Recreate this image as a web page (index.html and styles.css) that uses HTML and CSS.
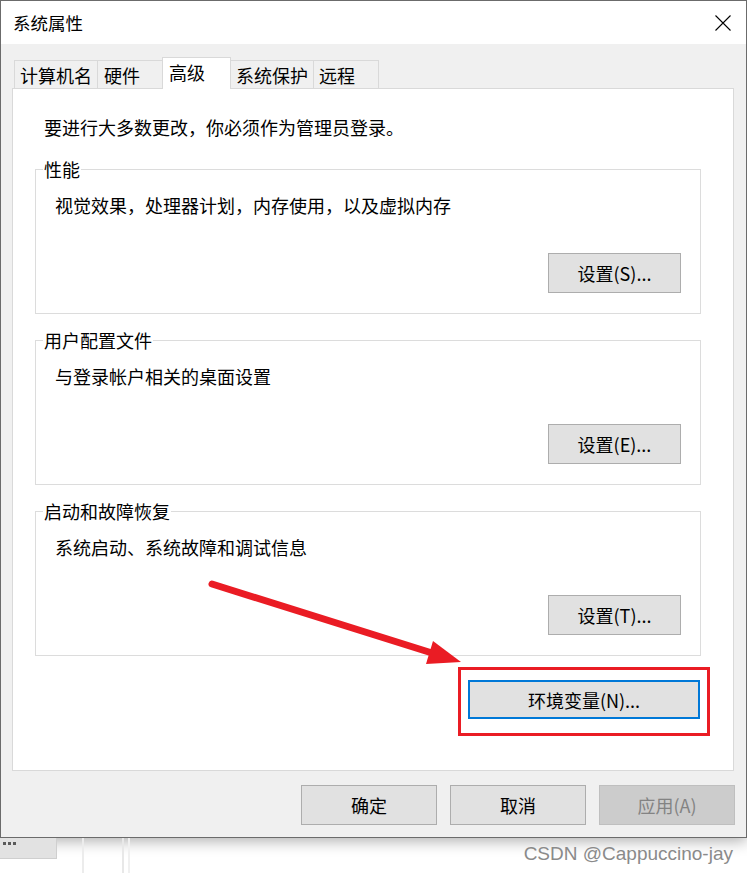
FILE: index.html
```html
<!DOCTYPE html>
<html lang="zh-CN">
<head>
<meta charset="utf-8">
<title>系统属性</title>
<link rel="stylesheet" href="styles.css">
</head>
<body>
<div class="window">
  <div class="titlebar">
    <span class="title">系统属性</span>
    <svg class="close" width="16" height="16" viewBox="0 0 16 16"><path d="M0.5 0.5 L15.5 15.5 M15.5 0.5 L0.5 15.5" stroke="#000" stroke-width="1.1" fill="none"/></svg>
  </div>
  <div class="body">
    <div class="tabs">
      <div class="tab">计算机名</div>
      <div class="tab">硬件</div>
      <div class="tab active">高级</div>
      <div class="tab">系统保护</div>
      <div class="tab">远程</div>
    </div>
    <div class="panel">
      <p class="intro">要进行大多数更改，你必须作为管理员登录。</p>
      <div class="group">
        <span class="group-title">性能</span>
        <p class="group-desc">视觉效果，处理器计划，内存使用，以及虚拟内存</p>
        <div class="group-actions"><button class="btn btn-set">设置(S)...</button></div>
      </div>
      <div class="group">
        <span class="group-title">用户配置文件</span>
        <p class="group-desc">与登录帐户相关的桌面设置</p>
        <div class="group-actions"><button class="btn btn-set">设置(E)...</button></div>
      </div>
      <div class="group">
        <span class="group-title">启动和故障恢复</span>
        <p class="group-desc">系统启动、系统故障和调试信息</p>
        <div class="group-actions"><button class="btn btn-set">设置(T)...</button></div>
      </div>
      <div class="env-row"><button class="btn btn-env">环境变量(N)...</button></div>
    </div>
    <div class="dialog-actions">
      <button class="btn btn-dlg">确定</button>
      <button class="btn btn-dlg">取消</button>
      <button class="btn btn-dlg btn-disabled">应用(A)</button>
    </div>
  </div>
</div>
<div class="desktop">
  <div class="taskbtn"><span class="dot"></span><span class="dot"></span><span class="dot"></span></div>
  <div class="vline vline-a"></div>
  <div class="vline vline-b"></div>
  <div class="watermark">CSDN @Cappuccino-jay</div>
</div>
<div class="annot-box"></div>
<svg class="annot-arrow" width="747" height="873" viewBox="0 0 747 873">
  <line x1="212" y1="584" x2="432" y2="653" stroke="#ea1c24" stroke-width="7" stroke-linecap="round"/>
  <polygon points="461,662 426,664 433,641" fill="#ea1c24"/>
</svg>
</body>
</html>
```
FILE: styles.css
```css
* { box-sizing: border-box; }
html, body { margin: 0; padding: 0; }
body {
  position: relative;
  width: 747px;
  height: 873px;
  overflow: hidden;
  background: #ffffff;
  font-family: "Noto Sans CJK SC", "Noto Sans", sans-serif;
  font-size: 18px;
  color: #000;
}
.window {
  width: 747px;
  height: 838px;
  border: 1px solid #6b6b6b;
  background: #f0f0f0;
  box-shadow: 0 3px 14px rgba(0,0,0,0.32);
  display: flex;
  flex-direction: column;
}
.titlebar {
  height: 43px;
  background: #fff;
  display: flex;
  align-items: center;
  justify-content: space-between;
  padding: 0 15px 0 12px;
}
.title { line-height: 24px; font-size: 17.5px; }
.close { display: block; margin-top: 1px; }
.body {
  height: 793px;
  padding: 13px 12px 0 11px;
}
.tabs {
  display: flex;
  align-items: flex-end;
  height: 31px;
  margin-left: 2px;
}
.tab {
  height: 28px;
  min-width: 66px;
  padding: 0 5px;
  border: 1px solid #d9d9d9;
  border-bottom: none;
  margin-left: -1px;
  background: #f0f0f0;
  display: flex;
  align-items: center;
  line-height: 24px;
  white-space: nowrap;
}
.tab:first-child { margin-left: 0; }
.tab:nth-child(2) { padding-left: 6px; }
.tab.active {
  position: relative;
  z-index: 1;
  height: 32px;
  margin-bottom: -1px;
  min-width: 69px;
  background: #fff;
  padding-left: 6px;
  padding-bottom: 3px;
}
.panel {
  height: 683px;
  width: 722px;
  background: #fff;
  border: 1px solid #d9d9d9;
  padding: 26px 32px 0 22px;
}
.intro {
  margin: 0 0 0 9px;
  line-height: 24px;
}
.group {
  border: 1px solid #dcdcdc;
  margin-top: 26px;
  padding: 0 19px 20px 19px;
}
.intro + .group { margin-top: 30px; }
.group-title {
  display: block;
  width: max-content;
  margin: -13px 0 0 -12px;
  padding: 0 1px;
  background: #fff;
  line-height: 24px;
}
.group-desc {
  margin: 12px 0 0 0;
  line-height: 24px;
}
.group-actions {
  margin-top: 36px;
  display: flex;
  justify-content: flex-end;
}
.btn {
  font-family: inherit;
  font-size: 18px;
  color: #000;
  background: #e1e1e1;
  border: 1px solid #adadad;
  padding: 0;
  margin: 0;
  line-height: 24px;
}
.btn-set { width: 133px; height: 40px; }
.env-row {
  margin-top: 24px;
  display: flex;
  justify-content: flex-end;
  padding-right: 1px;
}
.btn-env {
  width: 232px;
  height: 39px;
  border: 2px solid #0078d7;
}
.dialog-actions {
  margin-top: 14px;
  display: flex;
  justify-content: flex-end;
  gap: 13px;
  margin-right: -1px;
}
.btn-dlg { width: 136px; height: 40px; }
.btn-disabled {
  background: #cccccc;
  border-color: #bfbfbf;
  color: #838383;
}
.desktop {
  height: 35px;
  display: flex;
  align-items: flex-start;
}
.taskbtn {
  width: 57px;
  height: 21px;
  background: #e2e2e2;
  border-right: 1px solid #cfcfcf;
  border-bottom: 1px solid #cfcfcf;
  display: flex;
  align-items: flex-start;
  gap: 2px;
  padding: 4px 0 0 3px;
}
.dot {
  width: 3px;
  height: 3px;
  background: #5a5a5a;
}
.vline { height: 35px; }
.vline-a { width: 2px; background: #ececec; margin-left: 25px; }
.vline-b { width: 8px; border-left: 2px solid #e8e8e8; border-right: 2px solid #f0f0f0; margin-left: 38px; }
.watermark {
  margin-left: auto;
  margin-right: 14px;
  margin-top: 4px;
  font-family: "Liberation Sans", Arial, sans-serif;
  font-size: 19px;
  line-height: 24px;
  color: #8a8a8a;
  white-space: nowrap;
}
.annot-box {
  position: absolute;
  left: 458px;
  top: 667px;
  width: 252px;
  height: 69px;
  border: 3px solid #ea1c24;
}
.annot-arrow {
  position: absolute;
  left: 0;
  top: 0;
  pointer-events: none;
}
```
